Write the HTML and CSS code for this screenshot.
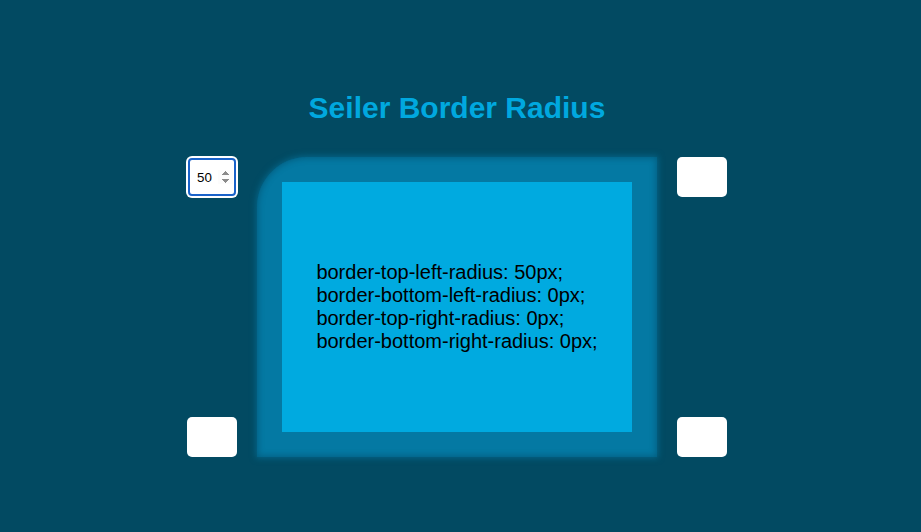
FILE: index.html
```html
<!DOCTYPE html>
<html lang="en">
<head>
<meta charset="utf-8">
<title>Seiler Border Radius</title>
<link rel="stylesheet" href="styles.css">
</head>
<body>
<main class="page">
  <h1 class="title">Seiler Border Radius</h1>
  <div class="previewer">
    <input class="radius-input tl" type="number" value="50" autofocus>
    <div class="box">
      <div class="inner">
        <p class="code">border-top-left-radius: 50px;<br>border-bottom-left-radius: 0px;<br>border-top-right-radius: 0px;<br>border-bottom-right-radius: 0px;</p>
      </div>
    </div>
    <input class="radius-input tr" type="number">
    <input class="radius-input bl" type="number">
    <input class="radius-input br" type="number">
  </div>
</main>
</body>
</html>
```
FILE: styles.css
```css
html, body {
  margin: 0;
  height: 100%;
}
body {
  background: #024a62;
  font-family: "Liberation Sans", Arial, sans-serif;
}
.page {
  padding: 91px 7px 0 0;
  display: flex;
  flex-direction: column;
  align-items: center;
}
.title {
  margin: 0 0 32px;
  font-size: 30px;
  font-weight: bold;
  color: #00a8df;
  line-height: 34px;
}
.previewer {
  display: grid;
  grid-template-columns: 50px 400px 50px;
  grid-template-rows: 150px 150px;
  column-gap: 20px;
}
.box {
  grid-column: 2;
  grid-row: 1 / 3;
  background: #0479a3;
  border-top-left-radius: 50px;
  box-shadow: 0 0 6px 1px #04678b, inset 0 0 6px 1px rgba(2, 60, 85, 0.45);
  display: flex;
  align-items: center;
  justify-content: center;
}
.inner {
  width: 350px;
  height: 250px;
  background: #00aae0;
  display: flex;
  align-items: center;
  justify-content: center;
}
.code {
  margin: 0;
  font-size: 20px;
  line-height: 23px;
  color: #000;
}
.radius-input {
  box-sizing: border-box;
  width: 50px;
  height: 40px;
  border: none;
  border-radius: 5px;
  background: #fff;
  font-family: "Liberation Sans", Arial, sans-serif;
  font-size: 13.33px;
  padding: 0 4px 0 10px;
  color: #000;
}
.radius-input:focus {
  outline: 2px solid #1a62c9;
  outline-offset: -3px;
  box-shadow: 0 0 0 1px #fff;
}
.tl { grid-column: 1; grid-row: 1; align-self: start; }
.tr { grid-column: 3; grid-row: 1; align-self: start; }
.bl { grid-column: 1; grid-row: 2; align-self: end; }
.br { grid-column: 3; grid-row: 2; align-self: end; }
```
